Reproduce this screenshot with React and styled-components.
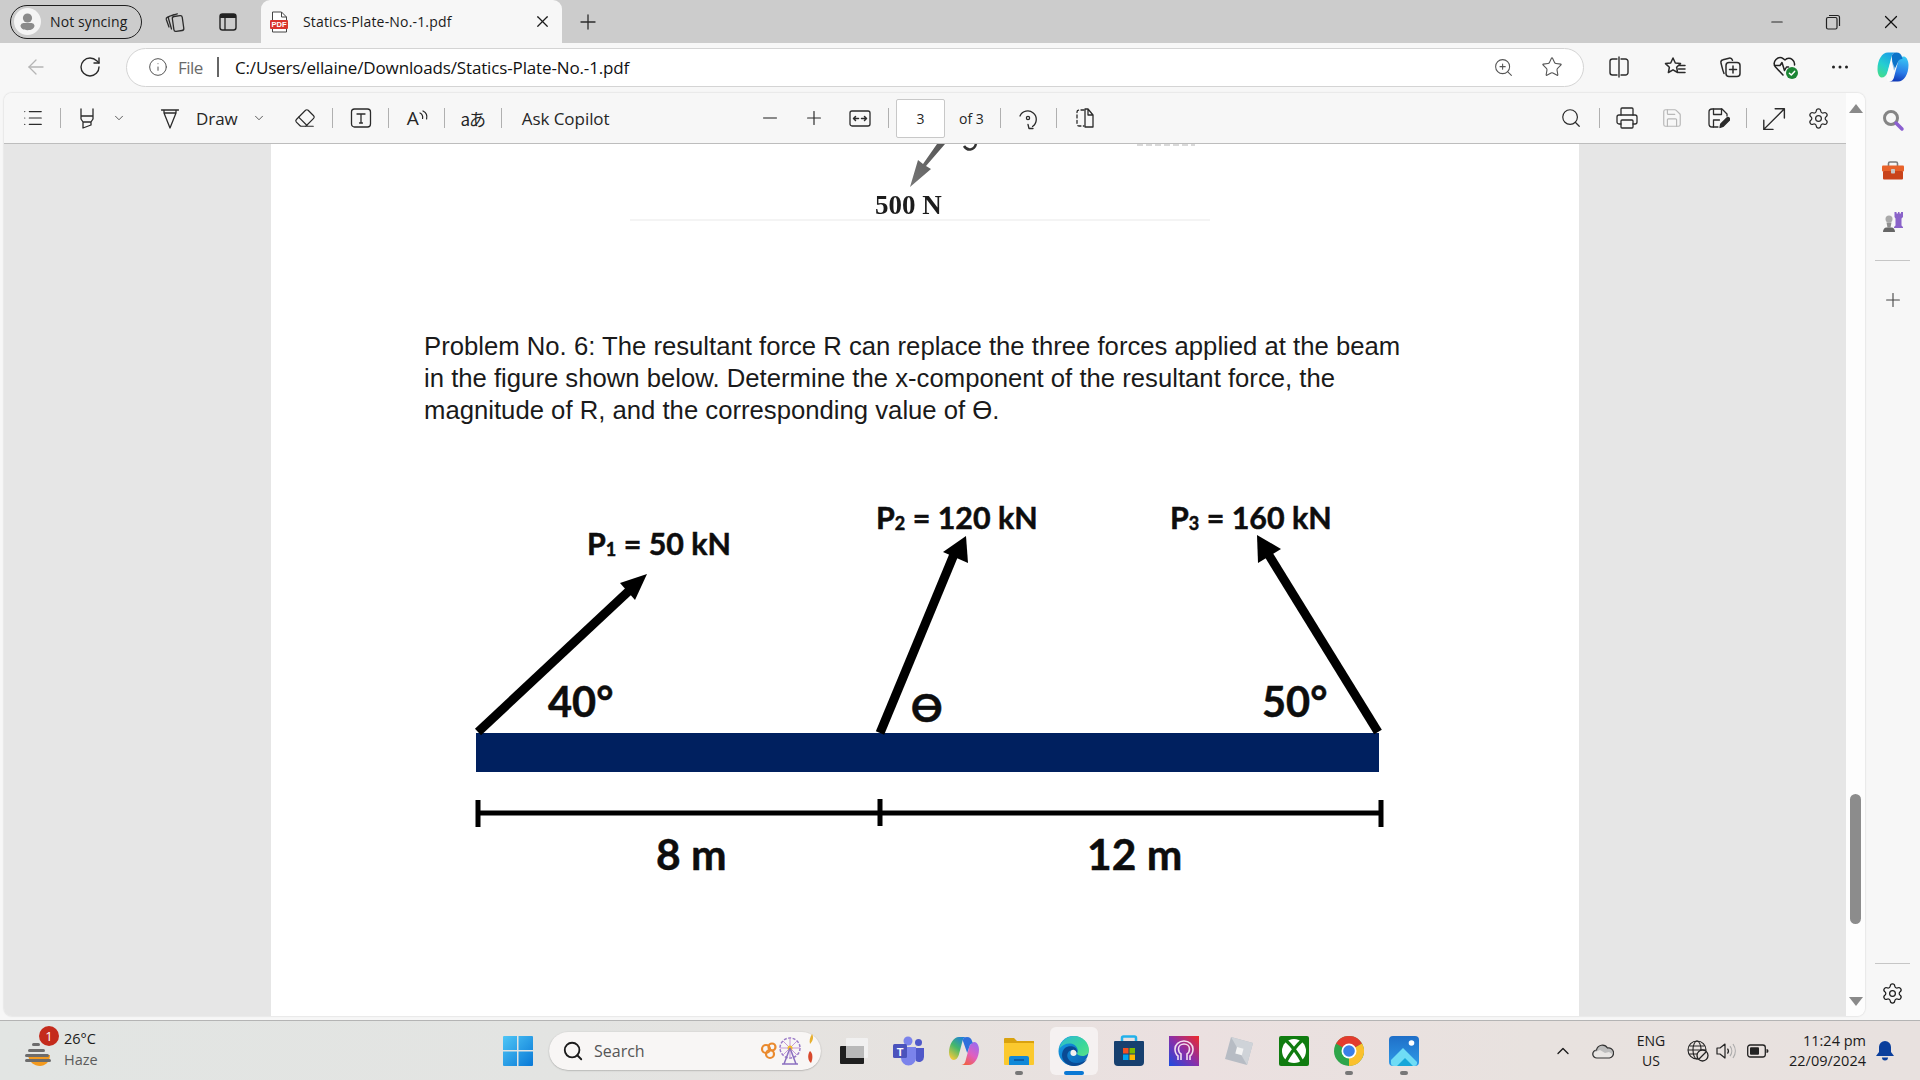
import styled, { createGlobalStyle } from "styled-components";
import {
  ArrowLeft, ChevronDown, ChevronUp, Eraser, Info, List, Minus, Plus,
  Printer, RotateCw, Save, Search, Settings, Star, X, ZoomIn,
} from "lucide-react";

const ui = `"Open Sans", "Noto Sans", sans-serif`;

const Global = createGlobalStyle`
  html, body { margin: 0; padding: 0; background: #f7f7f7; }
  * { box-sizing: border-box; }
`;

// ── Window frame ─────────────────────────────────────────────
const Shell = styled.div`
  width: 1920px;
  height: 1080px;
  overflow: hidden;
  display: flex;
  flex-direction: column;
  background: #f7f7f7;
  font-family: ${ui};
  color: #1b1b1b;
`;

const TabStrip = styled.div`
  height: 43px;
  flex: none;
  display: flex;
  align-items: center;
  background: #cccccc;
  padding-left: 10px;
`;

const ProfilePill = styled.div`
  width: 132px;
  height: 34px;
  flex: none;
  display: flex;
  align-items: center;
  gap: 9px;
  padding-left: 3px;
  border: 1.5px solid #1f1f1f;
  border-radius: 17px;
  font-size: 14px;
  letter-spacing: 0.1px;
`;

const Slot = styled.div`
  width: ${(p) => p.$w || 36}px;
  height: 32px;
  flex: none;
  margin-left: ${(p) => p.$ml || 0}px;
  display: flex;
  align-items: center;
  justify-content: center;
  color: ${(p) => p.$color || "#2b2b2b"};
`;

const Tab = styled.div`
  width: 301px;
  height: 43px;
  flex: none;
  margin-left: 13px;
  display: flex;
  align-items: center;
  padding: 0 0 0 8px;
  background: #f7f7f7;
  border-radius: 9px 9px 0 0;
`;

const TabTitle = styled.span`
  margin-left: 14px;
  width: 230px;
  font-size: 14px;
  letter-spacing: 0.17px;
`;

const WindowControls = styled.div`
  margin-left: auto;
  display: flex;
  padding-right: 1px;
`;

const AddressRow = styled.div`
  height: 50px;
  flex: none;
  display: flex;
  align-items: center;
  padding-left: 16px;
  padding-bottom: 2px;
`;

const AddressPill = styled.div`
  width: 1458px;
  height: 39px;
  flex: none;
  margin-left: 16px;
  display: flex;
  align-items: center;
  padding-left: 21px;
  background: #ffffff;
  border: 1.5px solid #d4d4d4;
  border-radius: 20px;
`;

const FileLabel = styled.span`
  margin-left: 10px;
  font-size: 17px;
  letter-spacing: -0.5px;
  color: #6a6a6a;
`;

const PillDivider = styled.span`
  width: 2px;
  height: 20px;
  margin: 0 16px 0 14px;
  background: #666666;
`;

const Url = styled.span`
  font-size: 17px;
  letter-spacing: -0.14px;
  color: #111111;
`;

const PillTools = styled.div`
  margin-left: auto;
  display: flex;
  padding-right: 13px;
`;

// ── Viewer ───────────────────────────────────────────────────
const MainRow = styled.div`
  flex: 1;
  min-height: 0;
  display: flex;
  padding-left: 4px;
`;

const Viewer = styled.div`
  width: 1861px;
  flex: none;
  margin-bottom: 4px;
  display: flex;
  border-radius: 8px;
  overflow: hidden;
  box-shadow: 0 0 2px rgba(0, 0, 0, 0.2);
`;

const ViewerMain = styled.div`
  width: 1842px;
  flex: none;
  display: flex;
  flex-direction: column;
`;

const PdfToolbar = styled.div`
  height: 51px;
  flex: none;
  display: flex;
  align-items: center;
  background: #f7f7f7;
  border-bottom: 1px solid #bdbdbd;
`;

const ToolGroup = styled.div`
  display: flex;
  align-items: center;
  width: ${(p) => (p.$w ? `${p.$w}px` : "auto")};
  flex: none;
  margin-left: ${(p) => (p.$end ? "auto" : 0)};
  padding-left: ${(p) => p.$pl || 0}px;
  padding-right: ${(p) => p.$pr || 0}px;
`;

const ToolSep = styled.span`
  width: 1px;
  height: 20px;
  flex: none;
  margin-left: ${(p) => p.$ml || 9}px;
  background: #b0b0b0;
`;

const ToolText = styled.span`
  flex: none;
  margin-left: ${(p) => p.$ml || 0}px;
  font-size: ${(p) => p.$size || 17}px;
  letter-spacing: ${(p) => p.$ls || "-0.05px"};
  color: #262626;
`;

const PageBox = styled.div`
  width: 49px;
  height: 39px;
  flex: none;
  margin-left: 7px;
  display: flex;
  align-items: center;
  justify-content: center;
  background: #ffffff;
  border: 1px solid #c8c8c8;
  border-radius: 2px;
  font-size: 14px;
  color: #262626;
`;

const AskGlyph = styled.span`
  font-family: "Noto Sans CJK JP", "Open Sans", sans-serif;
  font-size: 17px;
  letter-spacing: -1px;
  color: #262626;
`;

const ReadGlyph = styled.span`
  font-size: 19px;
  margin-left: 2px;
  color: #262626;
`;

const Canvas = styled.div`
  flex: 1;
  min-height: 0;
  padding-left: 267px;
  background: #e6e6e6;
`;

const PdfPage = styled.div`
  width: 1308px;
  height: 100%;
  background: #ffffff;
  overflow: hidden;
  display: flex;
  flex-direction: column;
  padding-left: 153px;
`;

const CutFigure = styled.svg`
  display: block;
  flex: none;
  width: 640px;
  height: 80px;
  margin-left: 176px;
`;

const Problem = styled.p`
  margin: 106px 0 0;
  flex: none;
  font-family: "Liberation Sans", Arial, sans-serif;
  font-size: 25.7px;
  line-height: 32px;
  color: #1a1a1a;
  white-space: nowrap;
`;

const Diagram = styled.svg`
  display: block;
  flex: none;
  width: 960px;
  height: 420px;
  margin: 54px 0 0 26px;
`;

const DiagramText = styled.text`
  font-family: Lato, "Open Sans", sans-serif;
  font-weight: 700;
  font-size: ${(p) => p.$size || 30.4}px;
  fill: #0d0d0d;
  stroke: #0d0d0d;
  stroke-width: 0.5px;
`;

const BlurText = styled.text`
  font-family: "Liberation Serif", serif;
  font-weight: 700;
  font-size: 27px;
  fill: #1c1c1c;
  filter: blur(0.4px);
`;

const ScrollTrack = styled.div`
  width: 19px;
  flex: none;
  display: flex;
  flex-direction: column;
  align-items: center;
  padding: 11px 0 10px;
  background: #fdfdfd;
`;

const Triangle = styled.span`
  width: 0;
  height: 0;
  flex: none;
  border-left: 7px solid transparent;
  border-right: 7px solid transparent;
  ${(p) => (p.$down ? "border-top: 9px solid #8a8a8a;" : "border-bottom: 9px solid #8a8a8a;")}
`;

const Thumb = styled.span`
  width: 11px;
  height: 130px;
  flex: none;
  margin-top: auto;
  margin-bottom: 73px;
  background: #8c8c8c;
  border-radius: 6px;
`;

const Sidebar = styled.div`
  width: 55px;
  flex: none;
  display: flex;
  flex-direction: column;
  align-items: center;
  padding: 2px 0 7px;
`;

const SideSlot = styled.div`
  width: 40px;
  height: ${(p) => p.$h || 50}px;
  flex: none;
  display: flex;
  align-items: center;
  justify-content: center;
`;

const SideRule = styled.span`
  width: 35px;
  height: 1px;
  flex: none;
  margin-top: ${(p) => (p.$auto ? "auto" : "12px")};
  margin-bottom: ${(p) => p.$mb || 19}px;
  background: #c6c6c6;
`;

// ── Taskbar ──────────────────────────────────────────────────
const Taskbar = styled.div`
  height: 60px;
  flex: none;
  display: flex;
  align-items: center;
  border-top: 1px solid #b4b4b4;
  background: linear-gradient(90deg, #e2e5e3 0%, #e3e4e2 30%, #e6e2df 48%, #ebe0e0 62%, #e8e2df 80%, #e8e1df 100%);
`;

const WeatherArea = styled.div`
  width: 490px;
  flex: none;
  display: flex;
  align-items: center;
  padding-left: 24px;
`;

const WeatherIcon = styled.div`
  position: relative;
  width: 30px;
  height: 36px;
  margin-right: 10px;
`;

const Badge = styled.span`
  position: absolute;
  top: -7px;
  left: 15px;
  width: 20px;
  height: 20px;
  display: flex;
  align-items: center;
  justify-content: center;
  border-radius: 50%;
  background: #c42b1c;
  color: #fff;
  font-size: 13px;
`;

const WeatherText = styled.div`
  display: flex;
  flex-direction: column;
  margin-top: -4px;
  font-size: 14.5px;
  line-height: 21px;
  span + span { color: #5c5c5c; }
`;

const TaskSlot = styled.div`
  position: relative;
  width: 55px;
  height: 48px;
  flex: none;
  margin-left: ${(p) => p.$ml || 0}px;
  display: flex;
  align-items: center;
  justify-content: center;
  &::before {
    content: "";
    display: ${(p) => (p.$active ? "block" : "none")};
    position: absolute;
    left: 4px;
    right: 3px;
    top: 0;
    bottom: 0;
    background: rgba(255, 255, 255, 0.55);
    border-radius: 6px;
  }
  &::after {
    content: "";
    display: ${(p) => (p.$dot || p.$active ? "block" : "none")};
    position: absolute;
    bottom: 0;
    left: 50%;
    width: ${(p) => (p.$active ? 20 : 8)}px;
    height: 4px;
    transform: translateX(-50%);
    border-radius: 2px;
    background: ${(p) => (p.$active ? "#0a78d4" : "#777777")};
  }
  svg { position: relative; }
`;

const SearchBox = styled.div`
  width: 272px;
  height: 38px;
  flex: none;
  margin-left: 4px;
  display: flex;
  align-items: center;
  padding-left: 13px;
  border-radius: 19px;
  background: #f8f6f5;
  box-shadow: 0 0.5px 1.5px rgba(0, 0, 0, 0.3);
  font-size: 16px;
  color: #555555;
`;

const SearchLabel = styled.span`
  margin-left: 10px;
`;

const SearchArt = styled.svg`
  margin-left: auto;
  margin-right: 5px;
`;

const Tray = styled.div`
  margin-left: auto;
  display: flex;
  align-items: center;
  padding-right: 25px;
`;

const TraySlot = styled.div`
  width: ${(p) => p.$w || 24}px;
  flex: none;
  margin-left: ${(p) => p.$ml || 0}px;
  display: flex;
  justify-content: center;
`;

const LangBox = styled.div`
  width: 40px;
  flex: none;
  margin-left: 13px;
  text-align: center;
  font-size: 14px;
  line-height: 20px;
`;

const Clock = styled.div`
  width: 90px;
  flex: none;
  margin-left: 6px;
  text-align: right;
  font-size: 14.5px;
  line-height: 20px;
  white-space: nowrap;
`;

// ── Small drawn icons ────────────────────────────────────────
const line = { fill: "none", stroke: "currentColor", strokeWidth: 1.3, strokeLinecap: "round", strokeLinejoin: "round" };
const I = ({ s = 24, children, color }) => (
  <svg width={s} height={s} viewBox="0 0 24 24" style={{ color }} {...line}>{children}</svg>
);
const lu = { strokeWidth: 1.3 };

const Avatar = () => (
  <svg width="27" height="27" viewBox="0 0 27 27">
    <circle cx="13.5" cy="13.5" r="13.5" fill="#f4f4f4" />
    <circle cx="13.5" cy="10" r="4.6" fill="#8a8a8a" />
    <path d="M6.5 17.5a3 3 0 0 1 3-2.5h8a3 3 0 0 1 3 2.5c0 3-3 4.7-7 4.7s-7-1.7-7-4.7z" fill="#8a8a8a" />
  </svg>
);
const Workspaces = () => (
  <I s={24}><rect x="10" y="6" width="10" height="15" rx="2" transform="rotate(-8 15 13)" /><path d="M8.5 19 5.5 8.5c-.3-1 .3-2 1.3-2.3l7.5-2.4M6 17 3.3 9.5c-.3-1 .2-2 1.2-2.4l6.5-2.6" /></I>
);
const VerticalTabs = () => (
  <svg width="22" height="22" viewBox="0 0 22 22">
    <rect x="3" y="3" width="16" height="16" rx="2.5" fill="none" stroke="#222" strokeWidth="1.4" />
    <path d="M3 5.5A2.5 2.5 0 0 1 5.5 3h11A2.5 2.5 0 0 1 19 5.5V7H3z" fill="#222" />
    <path d="M8 7v12" stroke="#222" strokeWidth="1.3" />
  </svg>
);
const PdfIcon = () => (
  <svg width="20" height="22" viewBox="0 0 20 22">
    <path d="M3.5 1h9l5 5v15h-14z" fill="#fff" stroke="#444" strokeWidth="1" />
    <path d="M12.5 1v5h5" fill="none" stroke="#444" strokeWidth="1" />
    <rect x="1" y="9" width="18" height="9" rx="1" fill="#d9352c" />
    <text x="10" y="16.2" textAnchor="middle" fontSize="7.5" fontWeight="700" fill="#fff" fontFamily="Liberation Sans">PDF</text>
  </svg>
);
const Highlighter = () => (
  <I><path d="M6 3v7h12V3M6 10v3l2 3h8l2-3v-3M8 16v6l8-3v-3" /></I>
);
const DrawPen = () => (
  <I><path d="M3.5 4h17M6 4v3l6 15 6-15V4M6 7h12" /></I>
);
const TextBox = () => (
  <I><rect x="2.5" y="3" width="19" height="18" rx="3" /><path d="M8 8h8M12 8v9M10.5 17h3" /></I>
);
const ReadWaves = () => (
  <svg width="10" height="16" viewBox="0 0 10 16" fill="none" stroke="#262626" strokeWidth="1.2" strokeLinecap="round">
    <path d="M1 3c2 1 3 3 2.6 5.5M4 1c3 1.6 4.5 4.5 3.6 8" />
  </svg>
);
const FitWidth = () => (
  <I><rect x="2" y="5" width="20" height="15" rx="2" /><path d="M5.5 12.5h5M7.5 10.5l-2 2 2 2M13.5 12.5h5M16.5 10.5l2 2-2 2" strokeWidth="1.5" /></I>
);
const RotateView = () => (
  <I><path d="M4 10a8.5 8.5 0 1 1 12.5 10.5" /><circle cx="12" cy="12" r="1.6" /><path d="M12 18.5l1 4h4" /></I>
);
const PageView = () => (
  <I><path d="M11 4H6a2 2 0 0 0-2 2v12a2 2 0 0 0 2 2h5" strokeDasharray="3 2.4" /><path d="M12 3v18h8V9l-5-6z M15 3v6h5" /></I>
);
const SaveAs = () => (
  <I><path d="M12 21H6a3 3 0 0 1-3-3V6a3 3 0 0 1 3-3h10l5 5v2" /><path d="M7.500 3v5.500h8V3M7.500 21v-7h6" /><path d="M14 21.500l.8-3.500 6-6a1.700 1.700 0 0 1 2.400 2.400l-6 6z" fill="currentColor" /></I>
);
const Expand = () => (
  <I s={26}><path d="M3.500 22.500 22.500 3.500M14 3.500h8.500V12M3.500 14v8.500H12" /></I>
);
const SplitScreen = () => (
  <I><path d="M10 4H5.5A2.5 2.5 0 0 0 3 6.500v11A2.500 2.500 0 0 0 5.500 20H10M14 4h4.500A2.500 2.500 0 0 1 21 6.500v11a2.500 2.500 0 0 1-2.500 2.500H14M12 2v20" strokeWidth="1.4" /></I>
);
const Favorites = () => (
  <I><path d="M10 3l2.300 5 5.200.6-3.900 3.600 1 5.300-4.600-2.700L5.400 17.500l1-5.300L2.500 8.600 7.700 8z" strokeWidth="1.5" /><path d="M16.500 10.500H22M15.500 14H22M15.500 17.500H22" strokeWidth="1.5" /></I>
);
const Collections = () => (
  <I><rect x="8" y="7.500" width="14" height="14" rx="3" strokeWidth="1.5" /><path d="M15 11v7M11.500 14.500h7" strokeWidth="1.5" /><path d="M6 18.500C4.500 15 3.500 10 3 8c-.3-1.500.5-3 2-3.300l6-1.500c1.500-.3 3 .5 3.500 2" strokeWidth="1.500" /></I>
);
const Health = () => (
  <svg width="28" height="28" viewBox="0 0 28 28" fill="none" stroke="#222" strokeWidth="1.5" strokeLinejoin="round" strokeLinecap="round">
    <path d="M12 22 4.500 14A5.800 5.800 0 0 1 12.500 5.800L14 7l1.500-1.200A5.800 5.800 0 0 1 23.500 12" />
    <path d="M3.500 12.500H9l2-3 2.500 8 2-3.500h2" />
    <circle cx="21" cy="20" r="6" fill="#1b8534" stroke="none" />
    <path d="M18.400 20.200l1.900 1.800 3.300-3.600" stroke="#fff" />
  </svg>
);
const Dots = () => (
  <svg width="20" height="6" viewBox="0 0 20 6" fill="#222">
    <circle cx="3.500" cy="3" r="1.500" /><circle cx="10" cy="3" r="1.500" /><circle cx="16.500" cy="3" r="1.500" />
  </svg>
);
const CopilotLogo = () => (
  <svg width="32" height="32" viewBox="0 0 32 32">
    <defs>
      <linearGradient id="cpa" x1="0.7" y1="0" x2="0.2" y2="1"><stop offset="0" stopColor="#1b9de8" /><stop offset=".55" stopColor="#25cfd0" /><stop offset="1" stopColor="#45dc8c" /></linearGradient>
      <linearGradient id="cpb" x1="0.6" y1="0" x2="0.4" y2="1"><stop offset="0" stopColor="#38c6f4" /><stop offset=".6" stopColor="#2a7de8" /><stop offset="1" stopColor="#1039b8" /></linearGradient>
    </defs>
    <path d="M11 1.500h8.500c-2.500 0-4 1-4.800 3.500L10.500 21c-1 3.500-3 5.500-6 5.500C1.800 26 .5 22 .5 18 .5 9 5 1.500 11 1.500z" fill="url(#cpa)" />
    <path d="M21 30.500h-9c2.500 0 4-1 4.800-3.500l4.200-16c1-3.500 3-5.500 6-5.500 2.800.5 4.500 4.500 4.500 8.500 0 9-4.500 16.500-10.500 16.500z" fill="url(#cpb)" />
    <path d="M14.700 5c.8-2.500 2.300-3.500 4.800-3.500 3 0 5 2 5.500 4.500l.5 2c-2-.4-3.500.7-4.500 3l-4 8.500-1.500-6z" fill="#0b73c9" />
    <path d="M10.500 21l3.700-12 3.800 8-3 9.500c-.8 2.500-2 3.700-4 4 -1.500-2-1.500-6-.5-9.500z" fill="#ffffff" fillOpacity=".55" />
  </svg>
);
const SideSearch = () => (
  <svg width="24" height="24" viewBox="0 0 24 24" fill="none">
    <circle cx="10" cy="10" r="6.500" stroke="#858585" strokeWidth="3" />
    <path d="M15 15l6 6" stroke="#8b5fd0" strokeWidth="3.500" strokeLinecap="round" />
  </svg>
);
const Toolbox = () => (
  <svg width="24" height="22" viewBox="0 0 24 22">
    <path d="M7.500 6V3.500A1.500 1.500 0 0 1 9 2h6a1.500 1.500 0 0 1 1.500 1.500V6" fill="none" stroke="#7a7a7a" strokeWidth="1.600" />
    <rect x="1" y="5.500" width="22" height="6" rx="1" fill="#e8622a" />
    <rect x="2" y="11" width="20" height="8.500" rx="1" fill="#c9431a" />
    <rect x="10" y="9" width="4" height="4.500" rx=".8" fill="#c6c6c6" />
  </svg>
);
const ChessPieces = () => (
  <svg width="24" height="24" viewBox="0 0 24 24">
    <path d="M13.500 2h2v1.500h1.500V2h1.500v1.500H20V2h2v5l-1.500 1.500v7l1.500 1.500v1h-9v-1l1.500-1.500v-7L13.500 7z" fill="#8a63c9" />
    <circle cx="8" cy="9" r="3.500" fill="#a9a9a9" />
    <path d="M5.500 12.500h5l-1 5h-3z" fill="#8f8f8f" />
    <path d="M2 22c0-2.500 1.500-4.500 3.500-4.500h5c2 0 3.500 2 3.500 4.500z" fill="#666" />
  </svg>
);

// taskbar weather and apps
const Sun = () => (
  <svg width="30" height="36" viewBox="0 0 30 36">
    <path d="M4 22h22c0 7-5 11-10 11-6 0-11-4-12-11z" fill="#f39a1e" />
    <g fill="#6c6c6c">
      <rect x="8" y="10" width="8" height="3" rx="1.500" /><rect x="4" y="16" width="17" height="3" rx="1.500" />
      <rect x="1" y="21" width="24" height="3" rx="1.500" /><rect x="1" y="26" width="26" height="3" rx="1.500" />
    </g>
  </svg>
);
const WinLogo = () => (
  <svg width="30" height="30" viewBox="0 0 30 30">
    <defs><linearGradient id="win" x1="0" y1="0" x2="1" y2="1"><stop offset="0" stopColor="#4fc6f6" /><stop offset="1" stopColor="#0878d6" /></linearGradient></defs>
    <path d="M0 1a1 1 0 0 1 1-1h13v14H0zM15.500 0H29a1 1 0 0 1 1 1v13H15.500zM0 15.500h14V30H1a1 1 0 0 1-1-1zM15.500 15.500H30V29a1 1 0 0 1-1 1H15.500z" fill="url(#win)" />
  </svg>
);
const TaskView = () => (
  <svg width="30" height="30" viewBox="0 0 30 30">
    <rect x="1" y="10" width="24" height="18" rx="1" fill="#1f1f1f" />
    <rect x="7" y="2" width="22" height="20" rx="1" fill="#f2f2f2" fillOpacity=".9" />
    <rect x="7" y="10" width="18" height="12" fill="#b9b9b9" />
  </svg>
);
const Teams = () => (
  <svg width="32" height="30" viewBox="0 0 32 30">
    <circle cx="25.500" cy="6.500" r="3.500" fill="#5059c9" />
    <path d="M20 12h11v9a5 5 0 0 1-8 4z" fill="#5059c9" />
    <circle cx="15" cy="5" r="4.500" fill="#7b83eb" />
    <path d="M8 11h15v11a7.500 7.500 0 0 1-15 0z" fill="#7b83eb" />
    <rect x="0" y="8" width="14" height="14" rx="1.500" fill="#4b53bc" />
    <text x="7" y="19.500" textAnchor="middle" fontSize="11" fontWeight="700" fill="#fff" fontFamily="Liberation Sans">T</text>
  </svg>
);
const CopilotColor = () => (
  <svg width="30" height="30" viewBox="0 0 30 30">
    <defs>
      <linearGradient id="cc1" x1="0.8" y1="0" x2="0.2" y2="1"><stop offset="0" stopColor="#1b7ce0" /><stop offset=".5" stopColor="#45b86a" /><stop offset="1" stopColor="#f6c93b" /></linearGradient>
      <linearGradient id="cc2" x1="0.8" y1="0" x2="0.2" y2="1"><stop offset="0" stopColor="#9a6cf0" /><stop offset=".5" stopColor="#e05fc0" /><stop offset="1" stopColor="#f2603c" /></linearGradient>
    </defs>
    <path d="M10 1h8c-2 0-3.500 1-4.300 3.300L9.800 19c-.9 3-2.800 5-5.800 5C1.500 23 0 20 0 16.500 0 8.500 4.500 1 10 1z" fill="url(#cc1)" />
    <path d="M20 29h-8c2 0 3.500-1 4.300-3.300l3.900-14.700c.9-3 2.800-5 5.800-5 2.500 1 4 4 4 7.500C30 21.500 25.500 29 20 29z" fill="url(#cc2)" />
    <path d="M13.700 4.300C14.500 2 16 1 18 1c3 0 4.500 2 5 4l.8 2.300c-1.800.2-3 1.500-3.600 3.700l-2 6z" fill="#2f6fdc" />
  </svg>
);
const Explorer = () => (
  <svg width="30" height="30" viewBox="0 0 30 30">
    <path d="M0 3a1 1 0 0 1 1-1h9l3 3h17v3H0z" fill="#d9a20f" />
    <path d="M0 7h29a1 1 0 0 1 1 1v20a1 1 0 0 1-1 1H1a1 1 0 0 1-1-1z" fill="#fbc92e" />
    <path d="M5 29v-7a2 2 0 0 1 2-2h16a2 2 0 0 1 2 2v7z" fill="#1088d8" />
    <rect x="10" y="23" width="10" height="2" fill="#0b5fa8" />
  </svg>
);
const Edge = () => (
  <svg width="32" height="32" viewBox="0 0 32 32">
    <defs>
      <linearGradient id="eg" x1="0" y1="0" x2="1" y2="1"><stop offset="0" stopColor="#2fb8d8" /><stop offset=".6" stopColor="#3ad79a" /><stop offset="1" stopColor="#58e08a" /></linearGradient>
      <linearGradient id="eb" x1="0" y1="0" x2="1" y2="1"><stop offset="0" stopColor="#14a0ea" /><stop offset="1" stopColor="#0b5cae" /></linearGradient>
    </defs>
    <circle cx="15.500" cy="16" r="15" fill="url(#eb)" />
    <path d="M1 14C3 6 9 1 16 1c8.500 0 15 6.500 15 14 0 3.500-2.500 6-6.500 6-3 0-5-1-5.500-2.500 1-1.500 1-3 .5-4.500C18 10 15 8.500 11.500 8.500 7.500 8.500 3.500 10.500 1 14z" fill="url(#eg)" />
    <path d="M19 18.500c-1-2.500-4-3.800-6.500-3-3 1-4 5-2.500 8 1.500 3 5 4.500 8.500 4.500 4.500 0 8-1.500 10.500-4-2 4-7 7-12.500 7C9 31 4 26 4 20c0-2.500 1-5 3-7 2.500-2 7-2.500 10-.5 1.500 1 2.500 3.500 2 6z" fill="#0a4a94" />
    <path d="M18.500 17.500c.5 2-1 3.500-3 3.500s-3.500-1.500-3-4c.5-1.500 2-2.500 3.500-2 1 .2 2 1.200 2.500 2.500z" fill="#f2f1f0" />
  </svg>
);
const Store = () => (
  <svg width="30" height="32" viewBox="0 0 30 32">
    <path d="M8 6V3a1.500 1.500 0 0 1 1.500-1.500h11A1.500 1.500 0 0 1 22 3v3" fill="none" stroke="#23b1ea" strokeWidth="2.500" />
    <path d="M0 7a1 1 0 0 1 1-1h28a1 1 0 0 1 1 1v20a4 4 0 0 1-4 4H4a4 4 0 0 1-4-4z" fill="#17406f" />
    <rect x="9" y="13" width="5.500" height="5.500" fill="#f25022" /><rect x="15.500" y="13" width="5.500" height="5.500" fill="#7fba00" />
    <rect x="9" y="19.500" width="5.500" height="5.500" fill="#00a4ef" /><rect x="15.500" y="19.500" width="5.500" height="5.500" fill="#ffb900" />
  </svg>
);
const PurpleApp = () => (
  <svg width="30" height="30" viewBox="0 0 30 30">
    <defs><linearGradient id="pa" x1="0" y1="1" x2="1" y2="0"><stop offset="0" stopColor="#1b4be0" /><stop offset=".5" stopColor="#8a2fa8" /><stop offset="1" stopColor="#f02a2a" /></linearGradient></defs>
    <rect width="30" height="30" fill="url(#pa)" />
    <path d="M9 24v-4c-2-1.500-3-4-3-7 0-4.500 4-8 9-8s9 3.500 9 8c0 3-1 5.500-3 7v4M12 24v-6c-1.500-1-2.500-3-2.500-5 0-3 2.500-5 5.500-5s5.500 2 5.500 5c0 2-1 4-2.500 5v6" fill="none" stroke="#f3dff0" strokeWidth="1.600" />
  </svg>
);
const Roblox = () => (
  <svg width="32" height="32" viewBox="0 0 32 32">
    <path d="M8 2 30 8 24 30 2 24z" fill="#b7bcc4" />
    <path d="M8 2 30 8 24 30z" fill="#cfd3d8" />
    <path d="M14 12l6.500 1.700-1.700 6.500-6.500-1.700z" fill="#f3f3f3" />
  </svg>
);
const Xbox = () => (
  <svg width="30" height="30" viewBox="0 0 30 30">
    <rect width="30" height="30" rx="2" fill="#107c10" />
    <circle cx="15" cy="15" r="12" fill="#fff" />
    <path d="M6 3.500C11 8 17 14 24 27M24 3.500C19 8 13 14 6 27" fill="none" stroke="#107c10" strokeWidth="3.200" />
  </svg>
);
const Chrome = () => (
  <svg width="30" height="30" viewBox="0 0 30 30">
    <circle cx="15" cy="15" r="15" fill="#2ea54a" />
    <path d="M15 15 2 7.500A15 15 0 0 1 28 7.500z" fill="#e33b2e" />
    <path d="M15 15 28 7.500A15 15 0 0 1 15 30z" fill="#fbc02d" />
    <circle cx="15" cy="15" r="7.500" fill="#fff" /><circle cx="15" cy="15" r="5.800" fill="#3b7fe8" />
  </svg>
);
const Photos = () => (
  <svg width="30" height="30" viewBox="0 0 30 30">
    <defs><linearGradient id="ph" x1="0" y1="0" x2="0" y2="1"><stop offset="0" stopColor="#1f6fc8" /><stop offset="1" stopColor="#2e9ae8" /></linearGradient></defs>
    <rect width="30" height="30" rx="4" fill="url(#ph)" />
    <circle cx="22.500" cy="7" r="2.800" fill="#fff" />
    <path d="M2 24 14 12l8 8 6 6v1a3 3 0 0 1-3 3H5a3 3 0 0 1-3-3z" fill="#6fdcf5" />
    <path d="M8 30l8-8 8 8z" fill="#16a7d9" />
  </svg>
);
const SearchDecor = () => (
  <SearchArt width="56" height="38" viewBox="0 0 56 38" fill="none">
    <circle cx="6" cy="17" r="4" stroke="#ea8a2e" strokeWidth="2.200" /><circle cx="10" cy="22" r="4" stroke="#ea8a2e" strokeWidth="2.200" /><circle cx="12" cy="15" r="3.500" stroke="#ea8a2e" strokeWidth="2.200" />
    <circle cx="30" cy="16" r="10" stroke="#9a7bc8" strokeWidth="1.500" strokeDasharray="3 1.500" />
    <path d="M30 6v20M20 16h20M23 9l14 14M37 9 23 23" stroke="#c59ad8" strokeWidth="1" />
    <circle cx="30" cy="16" r="2.500" fill="#f0b82c" /><path d="M30 16l-6 16M30 16l6 16M22 32h16" stroke="#8a6fc0" strokeWidth="1.500" />
    <path d="M52 2c2 3 1 7-2 10-1-3 0-7 2-10z" fill="#e7b030" /><path d="M50 19c3 2 3 8 1 12-3-2-4-8-1-12z" fill="#d8482c" />
  </SearchArt>
);
const CloudIcon = () => (
  <svg width="22" height="16" viewBox="0 0 22 16">
    <path d="M5 15a4 4 0 0 1-.5-8A6 6 0 0 1 15.500 5a4.500 4.500 0 0 1 2 10z" fill="#bdbdbd" />
    <path d="M2 9.500 8 7l5 3 4-1 3 2v3.500a1 1 0 0 1-1 .5H5a4 4 0 0 1-3-5.500z" fill="#e9e6e4" />
    <path d="M5 15a4 4 0 0 1-.5-8A6 6 0 0 1 15.500 5a4.500 4.500 0 0 1 2 10z" fill="none" stroke="#333" strokeWidth="1.200" />
  </svg>
);
const GlobeBlocked = () => (
  <svg width="22" height="22" viewBox="0 0 22 22" fill="none" stroke="#222" strokeWidth="1.100">
    <circle cx="10" cy="10" r="9" /><ellipse cx="10" cy="10" rx="4" ry="9" /><path d="M1 10h18M2.500 6h15M2.500 14h8" />
    <circle cx="15.500" cy="15.500" r="5.500" fill="#e8e2df" stroke="#222" strokeWidth="1.300" /><path d="M12 19l7-7" strokeWidth="1.300" />
  </svg>
);
const Speaker = () => (
  <svg width="22" height="18" viewBox="0 0 22 18" fill="none" strokeWidth="1.200">
    <path d="M1 6v6h3l5 4V2L4 6z" stroke="#222" strokeLinejoin="round" />
    <path d="M11.500 6.500a4 4 0 0 1 0 5" stroke="#222" /><path d="M14 4a8 8 0 0 1 0 10M17 2a12 12 0 0 1 0 14" stroke="#aaa" />
  </svg>
);
const Battery = () => (
  <svg width="22" height="14" viewBox="0 0 22 14">
    <rect x=".7" y="1" width="17.600" height="12" rx="2.500" fill="none" stroke="#222" strokeWidth="1.300" />
    <rect x="3" y="3.200" width="9" height="7.600" rx="1" fill="#222" />
    <path d="M19.500 5a2 2 0 0 1 0 4z" fill="#222" />
  </svg>
);
const BellFill = () => (
  <svg width="18" height="20" viewBox="0 0 18 20" fill="#0b3f9c">
    <path d="M9 0a6 6 0 0 1 6 6v5l3 4H0l3-4V6a6 6 0 0 1 6-6z" /><path d="M6 16.500h6a3 3 0 0 1-6 0z" />
  </svg>
);

const apps = [
  { el: <TaskView /> }, { el: <Teams /> }, { el: <CopilotColor /> }, { el: <Explorer />, dot: true },
  { el: <Edge />, active: true }, { el: <Store /> }, { el: <PurpleApp /> }, { el: <Roblox /> },
  { el: <Xbox /> }, { el: <Chrome />, dot: true }, { el: <Photos />, dot: true },
];

const App = () => (
  <Shell>
    <Global />
    <TabStrip>
      <ProfilePill><Avatar />Not syncing</ProfilePill>
      <Slot $w={40} $ml={13}><Workspaces /></Slot>
      <Slot $w={40} $ml={13}><VerticalTabs /></Slot>
      <Tab>
        <PdfIcon />
        <TabTitle>Statics-Plate-No.-1.pdf</TabTitle>
        <X size={19} strokeWidth={1.5} />
      </Tab>
      <Slot $w={40} $ml={6}><Plus size={24} strokeWidth={1.3} /></Slot>
      <WindowControls>
        <Slot $w={56}><Minus size={18} strokeWidth={1.4} /></Slot>
        <Slot $w={56}>
          <svg width="16" height="16" viewBox="0 0 16 16" fill="none" stroke="#222" strokeWidth="1.200"><rect x="1.500" y="3.500" width="10.500" height="11.500" rx="1.500" /><path d="M4 1.500h8.500A2 2 0 0 1 14.500 3.500V12" /></svg>
        </Slot>
        <Slot $w={56} $ml={2} $color="#111"><X size={22} strokeWidth={1.3} /></Slot>
      </WindowControls>
    </TabStrip>

    <AddressRow>
      <Slot $w={40} $color="#b5b5b5"><ArrowLeft size={24} strokeWidth={1.3} /></Slot>
      <Slot $w={40} $ml={14}><RotateCw size={24} strokeWidth={1.4} /></Slot>
      <AddressPill>
        <Info size={20} strokeWidth={1.2} color="#555" />
        <FileLabel>File</FileLabel>
        <PillDivider />
        <Url>C:/Users/ellaine/Downloads/Statics-Plate-No.-1.pdf</Url>
        <PillTools>
          <Slot $w={36} $color="#555"><ZoomIn size={21} strokeWidth={1.2} /></Slot>
          <Slot $w={36} $ml={13} $color="#555"><Star size={22} strokeWidth={1.2} /></Slot>
        </PillTools>
      </AddressPill>
      <Slot $w={40} $ml={15}><SplitScreen /></Slot>
      <Slot $w={40} $ml={16}><Favorites /></Slot>
      <Slot $w={40} $ml={15}><Collections /></Slot>
      <Slot $w={40} $ml={15}><Health /></Slot>
      <Slot $w={40} $ml={15}><Dots /></Slot>
      <Slot $w={40} $ml={13}><CopilotLogo /></Slot>
    </AddressRow>

    <MainRow>
      <Viewer>
        <ViewerMain>
          <PdfToolbar>
            <ToolGroup $w={748} $pl={9}>
              <Slot $w={40}><List size={22} {...lu} /></Slot>
              <ToolSep $ml={7} />
              <Slot $ml={8}><Highlighter /></Slot>
              <Slot $w={16} $ml={6}><ChevronDown size={14} {...lu} /></Slot>
              <Slot $ml={25}><DrawPen /></Slot>
              <ToolText $ml={8}>Draw</ToolText>
              <Slot $w={16} $ml={13}><ChevronDown size={14} {...lu} /></Slot>
              <Slot $ml={20}><Eraser size={22} {...lu} /></Slot>
              <ToolSep />
              <Slot $ml={10}><TextBox /></Slot>
              <ToolSep />
              <Slot $ml={10}><ReadGlyph>A</ReadGlyph><ReadWaves /></Slot>
              <ToolSep />
              <Slot $ml={10}><AskGlyph>aあ</AskGlyph></Slot>
              <ToolSep $ml={10} />
              <ToolText $ml={20}>Ask Copilot</ToolText>
            </ToolGroup>
            <ToolGroup>
              <Slot $color="#666"><Minus size={22} strokeWidth={1.5} /></Slot>
              <Slot $ml={8}><Plus size={22} {...lu} /></Slot>
              <Slot $ml={10}><FitWidth /></Slot>
              <ToolSep $ml={10} />
              <PageBox>3</PageBox>
              <ToolText $ml={14} $size={14} $ls="0">of 3</ToolText>
              <ToolSep $ml={16} />
              <Slot $ml={9}><RotateView /></Slot>
              <ToolSep $ml={10} />
              <Slot $ml={10}><PageView /></Slot>
            </ToolGroup>
            <ToolGroup $end $pr={10}>
              <Slot><Search size={22} {...lu} /></Slot>
              <ToolSep $ml={10} />
              <Slot $ml={9}><Printer size={24} {...lu} /></Slot>
              <Slot $ml={9} $color="#b8b8b8"><Save size={22} {...lu} /></Slot>
              <Slot $ml={10}><SaveAs /></Slot>
              <ToolSep $ml={10} />
              <Slot $ml={8}><Expand /></Slot>
              <Slot $ml={9}><Settings size={23} {...lu} /></Slot>
            </ToolGroup>
          </PdfToolbar>

          <Canvas>
            <PdfPage>
              {/* tail end of the figure from the previous problem */}
              <CutFigure viewBox="600 144 640 80">
                <defs><linearGradient id="fade" x1="1" y1="0" x2="0" y2="1"><stop offset="0" stopColor="#555" /><stop offset="1" stopColor="#777" /></linearGradient></defs>
                <path d="M945 144h-8l-14 20-5-4-8 27 21-18-5-3z" fill="url(#fade)" />
                <path d="M964 146c3 5 10 5 12-2" fill="none" stroke="#333" strokeWidth="2.500" />
                <path d="M1137 145h58" stroke="#d9d9d9" strokeWidth="2" strokeDasharray="6 3" />
                <BlurText x="875" y="214">500 N</BlurText>
                <path d="M630 220h580" stroke="#f4f4f4" strokeWidth="2" />
              </CutFigure>

              <Problem>
                Problem No. 6: The resultant force R can replace the three forces applied at the beam<br />
                in the figure shown below. Determine the x-component of the resultant force, the<br />
                magnitude of R, and the corresponding value of Ɵ.
              </Problem>

              <Diagram viewBox="450 480 960 420">
                <rect x="476" y="733" width="903" height="39" fill="#00205f" />
                <g stroke="#000" strokeWidth="9">
                  <path d="M478 732 632 588" />
                  <path d="M880 733 955 552" />
                  <path d="M1378 732 1267 552" />
                </g>
                <path d="M647 574 620 583 635 600z" />
                <path d="M966 536 943 552 968 563z" />
                <path d="M1257 535 1281 549 1258 563z" />
                <g stroke="#000">
                  <path d="M478 813H1381" strokeWidth="5" />
                  <path d="M478 800v27M880 799v27M1381 800v27" strokeWidth="5" />
                </g>
                <DiagramText x="587" y="555">P<tspan fontSize="18" dy="1">1</tspan><tspan dy="-1"> = 50 kN</tspan></DiagramText>
                <DiagramText x="876" y="529">P<tspan fontSize="18" dy="1">2</tspan><tspan dy="-1"> = 120 kN</tspan></DiagramText>
                <DiagramText x="1170" y="529">P<tspan fontSize="18" dy="1">3</tspan><tspan dy="-1"> = 160 kN</tspan></DiagramText>
                <DiagramText x="548" y="717" $size={41.500}>40°</DiagramText>
                <DiagramText x="911" y="722" $size={39}>Ɵ</DiagramText>
                <DiagramText x="1262" y="717" $size={41.500}>50°</DiagramText>
                <DiagramText x="656" y="870" $size={42.500}>8 m</DiagramText>
                <DiagramText x="1087" y="870" $size={42.500}>12 m</DiagramText>
              </Diagram>
            </PdfPage>
          </Canvas>
        </ViewerMain>
        <ScrollTrack>
          <Triangle />
          <Thumb />
          <Triangle $down />
        </ScrollTrack>
      </Viewer>

      <Sidebar>
        <SideSlot><SideSearch /></SideSlot>
        <SideSlot $h={51}><Toolbox /></SideSlot>
        <SideSlot $h={52}><ChessPieces /></SideSlot>
        <SideRule />
        <SideSlot $h={40}><Plus size={22} strokeWidth={1.2} color="#444" /></SideSlot>
        <SideRule $auto $mb={9} />
        <SideSlot $h={40}><Settings size={23} strokeWidth={1.3} /></SideSlot>
      </Sidebar>
    </MainRow>

    <Taskbar>
      <WeatherArea>
        <WeatherIcon><Sun /><Badge>1</Badge></WeatherIcon>
        <WeatherText><span>26°C</span><span>Haze</span></WeatherText>
      </WeatherArea>
      <TaskSlot><WinLogo /></TaskSlot>
      <SearchBox>
        <Search size={22} strokeWidth={2} color="#1b1b1b" />
        <SearchLabel>Search</SearchLabel>
        <SearchDecor />
      </SearchBox>
      {apps.map((a, i) => (
        <TaskSlot key={i} $ml={i === 0 ? 5 : 0} $dot={a.dot} $active={a.active}>{a.el}</TaskSlot>
      ))}
      <Tray>
        <TraySlot><ChevronUp size={20} strokeWidth={1.6} /></TraySlot>
        <TraySlot $w={30} $ml={13}><CloudIcon /></TraySlot>
        <LangBox>ENG<br />US</LangBox>
        <TraySlot $ml={15}><GlobeBlocked /></TraySlot>
        <TraySlot $ml={5}><Speaker /></TraySlot>
        <TraySlot $ml={7}><Battery /></TraySlot>
        <Clock>11:24 pm<br />22/09/2024</Clock>
        <TraySlot $w={20} $ml={9}><BellFill /></TraySlot>
      </Tray>
    </Taskbar>
  </Shell>
);

export default App;
